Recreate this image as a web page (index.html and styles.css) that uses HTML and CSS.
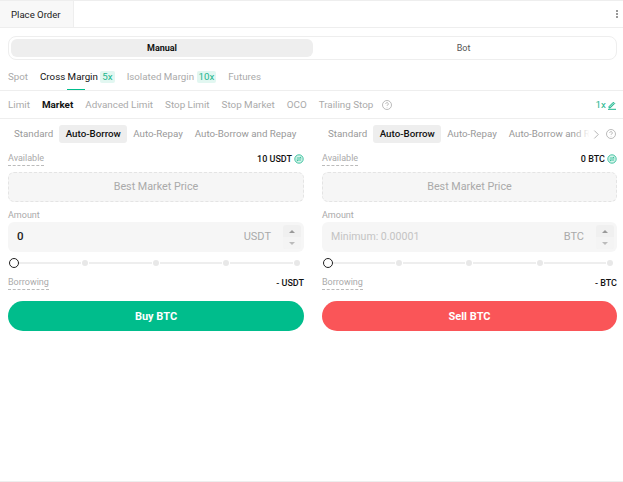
FILE: index.html
```html
<!DOCTYPE html>
<html lang="en">
<head>
<meta charset="utf-8">
<title>Place Order</title>
<link rel="stylesheet" href="styles.css">
</head>
<body>
<div class="page">
  <header class="head">
    <div class="head-tab">Place Order</div>
    <div class="kebab"><i></i><i></i><i></i></div>
  </header>
  <div class="mode-wrap">
    <div class="mode">
      <div class="mode-item on">Manual</div>
      <div class="mode-item">Bot</div>
    </div>
  </div>
  <nav class="markets">
    <span>Spot</span>
    <span class="m-on">Cross Margin <b class="lev">5x</b></span>
    <span>Isolated Margin <b class="lev">10x</b></span>
    <span>Futures</span>
  </nav>
  <nav class="types">
    <span>Limit</span>
    <span class="t-on">Market</span>
    <span>Advanced Limit</span>
    <span>Stop Limit</span>
    <span>Stop Market</span>
    <span>OCO</span>
    <span>Trailing Stop</span>
    <svg class="help" viewBox="0 0 12 12"><circle cx="6" cy="6" r="4.5"/><path d="M4.7 4.900a1.300 1.300 0 1 1 2 1.100c-.5.3-.7.5-.7 1"/><path d="M6 8.200v.4"/></svg>
    <span class="leverage">1x<svg viewBox="0 0 10 10"><path d="M2 6.600 6.400 2.200l1.300 1.300-4.400 4.400H2z"/><path d="M1 9.300h8"/></svg></span>
  </nav>
  <main class="cols">
    <section class="col">
      <div class="subtabs">
        <span>Standard</span><span class="s-on">Auto-Borrow</span><span>Auto-Repay</span><span>Auto-Borrow and Repay</span>
      </div>
      <div class="row">
        <span class="dash">Available</span>
        <span class="val">10 USDT<svg class="swap" viewBox="0 0 10 10"><circle cx="5" cy="5" r="4.200"/><path d="M2.800 4h4.400L6 2.900M7.200 6H2.800L4 7.100"/></svg></span>
      </div>
      <div class="best">Best Market Price</div>
      <div class="lbl">Amount</div>
      <div class="amount">
        <span class="num">0</span>
        <span class="unit">USDT</span>
        <div class="step"><span class="up"></span><span class="down"></span></div>
      </div>
      <div class="slider"><i class="knob"></i><i class="seg"></i><i class="dot"></i><i class="seg"></i><i class="dot"></i><i class="seg"></i><i class="dot"></i><i class="seg"></i><i class="dot"></i></div>
      <div class="row borrow">
        <span class="dash">Borrowing</span>
        <span class="val">- USDT</span>
      </div>
      <button class="cta buy">Buy BTC</button>
    </section>
    <section class="col">
      <div class="subtabs clip">
        <div class="subtabs-in"><span>Standard</span><span class="s-on">Auto-Borrow</span><span>Auto-Repay</span><span>Auto-Borrow and Repay</span></div>
        <div class="fade"><svg class="chev" viewBox="0 0 8 12"><path d="M1.500 1.500 6 6l-4.500 4.500"/></svg></div>
        <svg class="help help-end" viewBox="0 0 12 12"><circle cx="6" cy="6" r="4.500"/><path d="M4.700 4.900a1.300 1.300 0 1 1 2 1.100c-.5.3-.7.5-.7 1"/><path d="M6 8.200v.4"/></svg>
      </div>
      <div class="row">
        <span class="dash">Available</span>
        <span class="val">0 BTC<svg class="swap" viewBox="0 0 10 10"><circle cx="5" cy="5" r="4.200"/><path d="M2.800 4h4.400L6 2.900M7.200 6H2.800L4 7.100"/></svg></span>
      </div>
      <div class="best">Best Market Price</div>
      <div class="lbl">Amount</div>
      <div class="amount">
        <span class="num ph">Minimum: 0.00001</span>
        <span class="unit">BTC</span>
        <div class="step"><span class="up"></span><span class="down"></span></div>
      </div>
      <div class="slider"><i class="knob"></i><i class="seg"></i><i class="dot"></i><i class="seg"></i><i class="dot"></i><i class="seg"></i><i class="dot"></i><i class="seg"></i><i class="dot"></i></div>
      <div class="row borrow">
        <span class="dash">Borrowing</span>
        <span class="val">- BTC</span>
      </div>
      <button class="cta sell">Sell BTC</button>
    </section>
  </main>
</div>
</body>
</html>
```
FILE: styles.css
```css
* { box-sizing: border-box; }
html, body { margin: 0; height: 100%; }
body { background: #fff; font-family: Roboto, "Liberation Sans", sans-serif; color: #121212; overflow: hidden; }
.page { height: 482px; border-top: 1px solid #eee; border-bottom: 1px solid #eee; display: flex; flex-direction: column; }

.head { height: 27px; flex: none; display: flex; justify-content: space-between; align-items: center; border-bottom: 1px solid #eee; }
.head-tab { width: 74px; height: 26px; background: #f8f8f8; border-right: 1px solid #eee; font-size: 9.6px; line-height: 28px; padding-left: 11px; color: #222; }
.kebab { display: flex; flex-direction: column; gap: 1px; margin-right: 5px; }
.kebab i { width: 2px; height: 2px; background: #999; }

.mode-wrap { padding: 8px 6px 0 8px; flex: none; }
.mode { height: 24px; border: 1px solid #eee; border-radius: 8px; padding: 2px; display: grid; grid-template-columns: 302px 1fr; }
.mode-item { font-size: 9px; line-height: 18px; text-align: center; color: #555; border-radius: 6px; }
.mode-item.on { background: #eee; color: #121212; font-weight: 700; }

.markets { height: 31px; flex: none; display: flex; align-items: center; gap: 12px; padding: 3px 0 0 8px; font-size: 9.75px; color: #aaa; border-bottom: 1px solid #eee; }
.markets span { white-space: nowrap; position: relative; }
.markets .m-on { color: #121212; }
.markets .m-on::after { content: ""; position: absolute; left: 27px; width: 18px; bottom: -7px; height: 1px; background: #00bd8c; }
.lev { display: inline-block; font-weight: 400; font-size: 9.75px; line-height: 12px; padding: 0 2px; background: #e2f7f1; color: #1cb68e; border-radius: 2px; }

.types { height: 28px; flex: none; display: flex; align-items: center; gap: 12px; padding-left: 8px; padding-right: 6px; font-size: 9.85px; color: #aaa; border-bottom: 1px solid #eee; }
.types span { white-space: nowrap; }
.types .t-on { color: #121212; font-weight: 700; }
.help { width: 12px; height: 12px; fill: none; stroke: #aaa; stroke-width: .8; flex: none; }
.types .help { margin-left: -4px; }
.leverage { margin-left: auto; color: #1cb68e; display: flex; align-items: center; gap: 1px; }
.leverage svg { width: 10px; height: 10px; fill: #8fdcc6; stroke: #1cb68e; stroke-width: 1; }

.cols { display: grid; grid-template-columns: 296px 295px; column-gap: 18px; padding-left: 8px; }
.col { min-width: 0; }
.subtabs { height: 18px; margin-top: 6px; display: flex; align-items: center; font-size: 9.75px; color: #999; white-space: nowrap; }
.subtabs-in { display: flex; align-items: center; overflow: hidden; flex: 1; min-width: 0; }
.subtabs span { line-height: 18px; padding: 0 6px; }
.subtabs .s-on { background: #eee; color: #121212; font-weight: 500; padding: 0 6.5px; border-radius: 3px; }
.subtabs.clip { position: relative; padding-right: 17px; }
.fade { position: absolute; right: 17px; top: 0; width: 26px; height: 18px; background: linear-gradient(90deg, rgba(255,255,255,0), #fff 60%); display: flex; align-items: center; justify-content: flex-end; }
.chev { width: 7px; height: 11px; fill: none; stroke: #aaa; stroke-width: 1; }
.help-end { position: absolute; right: 0; top: 3px; }

.row { display: flex; justify-content: space-between; align-items: center; height: 14px; margin-top: 9px; font-size: 9px; }
.dash { color: #aaa; border-bottom: 1px dashed #bbb; line-height: 12px; height: 14px; }
.val { font-weight: 500; color: #121212; display: flex; align-items: center; gap: 2px; }
.swap { width: 10px; height: 10px; fill: #d8f5ec; stroke: #1cb68e; stroke-width: .8; }

.best { height: 30px; margin-top: 6px; background: #f6f6f6; border: 1px dashed #e4e4e4; border-radius: 6px; text-align: center; font-size: 10.75px; line-height: 28px; color: #aaa; }
.lbl { font-size: 9px; color: #aaa; line-height: 12px; margin-top: 7px; }
.amount { height: 30px; margin-top: 1px; background: #f6f6f6; border-radius: 6px; display: flex; align-items: center; padding: 2px 3px 2px 9px; font-size: 11px; }
.num { font-weight: 500; color: #222; flex: 1; font-size: 11.5px; padding-bottom: 2px; }
.num.ph { font-weight: 400; color: #c4c4c4; font-size: 10.6px; }
.unit { color: #aaa; margin-right: 12px; font-size: 11px; padding-bottom: 2px; }
.step { width: 18px; height: 24px; display: flex; flex-direction: column; background: #f0f0f0; border-radius: 3px; overflow: hidden; }
.step span { flex: 1; display: flex; align-items: center; justify-content: center; }
.step .down { background: #f4f4f4; }
.up::before { content: ""; border: 3px solid transparent; border-top: 0; border-bottom: 3px solid #999; }
.down::before { content: ""; border: 3px solid transparent; border-bottom: 0; border-top: 3px solid #bbb; }

.slider { height: 12px; margin-top: 5px; display: flex; align-items: center; padding: 0 4px 0 1px; }
.slider i { display: block; flex: none; }
.slider .knob { width: 10px; height: 10px; border: 1.5px solid #222; border-radius: 50%; background: #fff; margin-right: -2px; position: relative; }
.slider .seg { flex: 1; height: 2px; background: #eee; margin: 0 1px; }
.dot { width: 6px; height: 6px; border-radius: 50%; background: #e8e8e8; }

.borrow { margin-top: 7px; }
.cta { display: block; width: 100%; height: 30px; margin-top: 11px; border: 0; border-radius: 15px; color: #fff; font-family: inherit; font-size: 11px; font-weight: 700; }
.buy { background: #00bd8c; }
.sell { background: #fa5558; }
```
